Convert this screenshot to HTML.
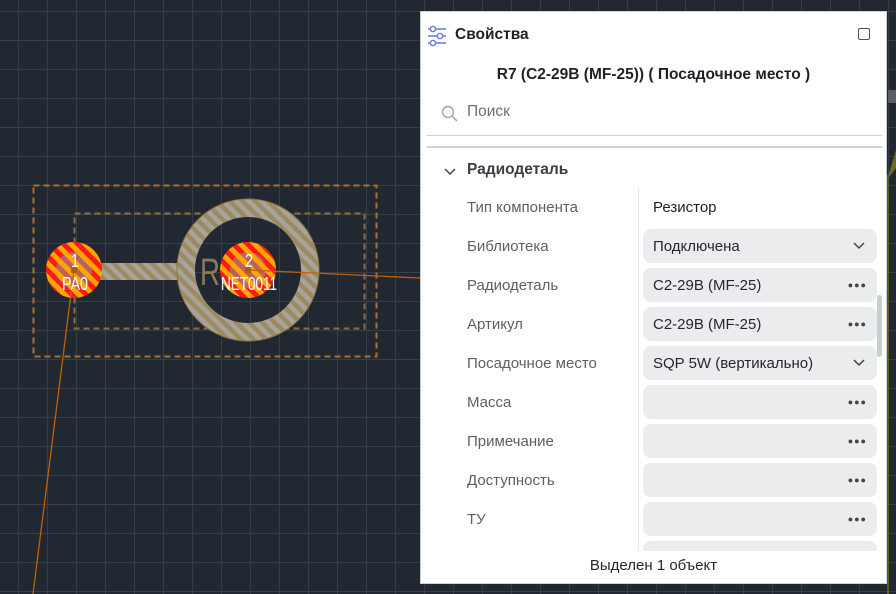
<!DOCTYPE html>
<html><head><meta charset="utf-8"><style>
*{margin:0;padding:0;box-sizing:border-box}
body{width:896px;height:594px;overflow:hidden;position:relative;font-family:"Liberation Sans",sans-serif;
background-color:#222831;
background-image:linear-gradient(to right,#373e47 1px,transparent 1px),linear-gradient(to bottom,#373e47 1px,transparent 1px);
background-size:29px 29px;background-position:18px 11px}
svg.pcb{position:absolute;left:0;top:0}
#panel{position:absolute;left:420px;top:11px;width:467px;height:573px;background:#fff;border:1px solid #c9d2d2;color:#1e2228}
.t{position:absolute;white-space:nowrap}
.lbl{position:absolute;left:46px;font-size:15px;color:#5c6068}
.box{position:absolute;left:222px;width:234px;height:34px;line-height:36px;background:#ebeced;border-radius:8px;font-size:15px;color:#23272e;padding:0 0 0 10px}
.dots{position:absolute;right:10px;top:-1px;font-size:9px;letter-spacing:1px;color:#444}
.chev{position:absolute;right:12px;top:13px}
</style></head><body>
<svg class="pcb" width="420" height="594" viewBox="0 0 420 594">
<defs>
<pattern id="st" width="9" height="9" patternUnits="userSpaceOnUse" patternTransform="rotate(-45)">
<rect width="9" height="9" fill="#a8a49a"/><rect width="4.5" height="9" fill="#9e8a62"/></pattern>
<pattern id="rs" width="10" height="10" patternUnits="userSpaceOnUse" patternTransform="rotate(-45)">
<rect width="10" height="10" fill="#ffa500"/><rect width="5" height="10" fill="#ff1a1a"/></pattern>
<pattern id="gs" width="10" height="10" patternUnits="userSpaceOnUse" patternTransform="rotate(-45)">
<rect width="10" height="10" fill="#ffa500"/><rect width="5" height="10" fill="#8f8f8f"/></pattern>
</defs>
<rect x="33.5" y="185.5" width="343" height="171" fill="none" stroke="#a86f35" stroke-width="2" stroke-dasharray="6,4"/>
<rect x="74.5" y="213.5" width="290" height="115" fill="none" stroke="#8f6a45" stroke-width="2" stroke-dasharray="6,4"/>
<rect x="95" y="263" width="90" height="17" fill="url(#st)"/>
<circle cx="248" cy="270" r="62" fill="none" stroke="url(#st)" stroke-width="18"/>
<circle cx="248" cy="270" r="71" fill="none" stroke="#8a7a40" stroke-width="1"/>
<text x="200" y="285" font-size="38" fill="#8a7a5a" textLength="20" lengthAdjust="spacingAndGlyphs">R</text>
<circle cx="74" cy="270" r="28" fill="url(#rs)"/>
<circle cx="74" cy="270" r="18" fill="url(#gs)" opacity=".6"/>
<circle cx="248" cy="270" r="28" fill="url(#rs)"/>
<circle cx="248" cy="270" r="18" fill="url(#gs)" opacity=".6"/>
<line x1="248" y1="270" x2="420" y2="278" stroke="#c0600a" stroke-width="1.3"/>
<line x1="74" y1="270" x2="33" y2="594" stroke="#c0600a" stroke-width="1.3"/>
<rect x="71" y="267" width="6" height="6" fill="#b05a10"/>
<rect x="245" y="267" width="6" height="6" fill="#b05a10"/>
<g fill="#fff" font-size="18">
<text x="71" y="267" textLength="8" lengthAdjust="spacingAndGlyphs">1</text><text x="62" y="290" textLength="26" lengthAdjust="spacingAndGlyphs">PA0</text>
<text x="245" y="267" textLength="8" lengthAdjust="spacingAndGlyphs">2</text><text x="221" y="290" textLength="56" lengthAdjust="spacingAndGlyphs">NET0011</text></g>
</svg>
<div style="position:absolute;left:888px;top:90px;width:8px;height:13px;background:#5a5f66"></div>
<div style="position:absolute;left:887px;top:150px;width:9px;height:30px;background:#6b6a2a;clip-path:polygon(0 100%,100% 0,100% 60%,0 100%)"></div>
<div style="position:absolute;left:887px;top:175px;width:2px;height:419px;background:#5f5e25"></div>
<div id="panel">
<svg style="position:absolute;left:6px;top:13px" width="20" height="22" viewBox="0 0 20 22" fill="none" stroke="#6a76d8" stroke-width="1.4">
<line x1="1" y1="4" x2="19" y2="4"/><line x1="1" y1="11" x2="19" y2="11"/><line x1="1" y1="18" x2="19" y2="18"/>
<circle cx="6" cy="4" r="2.6" fill="#fff"/><circle cx="13" cy="11" r="2.6" fill="#fff"/><circle cx="6" cy="18" r="2.6" fill="#fff"/></svg>
<div class="t" style="left:34px;top:14px;font-size:15.5px;font-weight:bold">Свойства</div>
<div style="position:absolute;left:437px;top:16px;width:12px;height:12px;border:1.5px solid #555;border-radius:2px"></div>
<div class="t" style="left:0;width:465px;text-align:center;top:54px;font-size:15.5px;font-weight:bold">R7 (C2-29B (MF-25)) ( Посадочное место )</div>
<svg style="position:absolute;left:20px;top:93px" width="17" height="17" viewBox="0 0 17 17" fill="none" stroke="#9aa" stroke-width="1.4"><circle cx="7" cy="7" r="5.5"/><line x1="11" y1="11" x2="16" y2="16"/></svg>
<div class="t" style="left:46px;top:91px;font-size:15.5px;color:#6a7078">Поиск</div>
<div style="position:absolute;left:6px;top:123px;width:455px;height:1px;background:#c9d4d4"></div>
<div style="position:absolute;left:6px;top:134px;width:455px;height:2px;background:#c9d4d4"></div>
<svg style="position:absolute;left:22px;top:155px" width="14" height="10" viewBox="0 0 14 10" fill="none" stroke="#444" stroke-width="1.5"><polyline points="2,2 7,7 12,2"/></svg>
<div class="t" style="left:46px;top:149px;font-size:15.5px;font-weight:bold;color:#3a3e45">Радиодеталь</div>
<div style="position:absolute;left:217px;top:175px;width:1px;height:364px;background:#ece6f2"></div>
<div style="position:absolute;left:0;top:175px;width:465px;height:364px;overflow:hidden">
<div class="lbl" style="top:12px">Тип компонента</div>
<div class="t" style="left:232px;top:12px;font-size:15px">Резистор</div>
<div class="lbl" style="top:51px">Библиотека</div>
<div class="box" style="top:42px">Подключена<svg class="chev" width="12" height="8" viewBox="0 0 12 8" fill="none" stroke="#444" stroke-width="1.5"><polyline points="1,1 6,6 11,1"/></svg></div>
<div class="lbl" style="top:90px">Радиодеталь</div>
<div class="box" style="top:81px">C2-29B (MF-25)<span class="dots">●●●</span></div>
<div class="lbl" style="top:129px">Артикул</div>
<div class="box" style="top:120px">C2-29B (MF-25)<span class="dots">●●●</span></div>
<div class="lbl" style="top:168px">Посадочное место</div>
<div class="box" style="top:159px">SQP 5W (вертикально)<svg class="chev" width="12" height="8" viewBox="0 0 12 8" fill="none" stroke="#444" stroke-width="1.5"><polyline points="1,1 6,6 11,1"/></svg></div>
<div class="lbl" style="top:207px">Масса</div>
<div class="box" style="top:198px"><span class="dots">●●●</span></div>
<div class="lbl" style="top:246px">Примечание</div>
<div class="box" style="top:237px"><span class="dots">●●●</span></div>
<div class="lbl" style="top:285px">Доступность</div>
<div class="box" style="top:276px"><span class="dots">●●●</span></div>
<div class="lbl" style="top:324px">ТУ</div>
<div class="box" style="top:315px"><span class="dots">●●●</span></div>
<div class="box" style="top:354px"></div>
</div>
<div style="position:absolute;left:456px;top:283px;width:5px;height:62px;background:#c6d0d0;border-radius:3px"></div>
<div class="t" style="left:0;width:465px;text-align:center;top:545px;font-size:15px;color:#23272e">Выделен 1 объект</div>
</div>
</body></html>
